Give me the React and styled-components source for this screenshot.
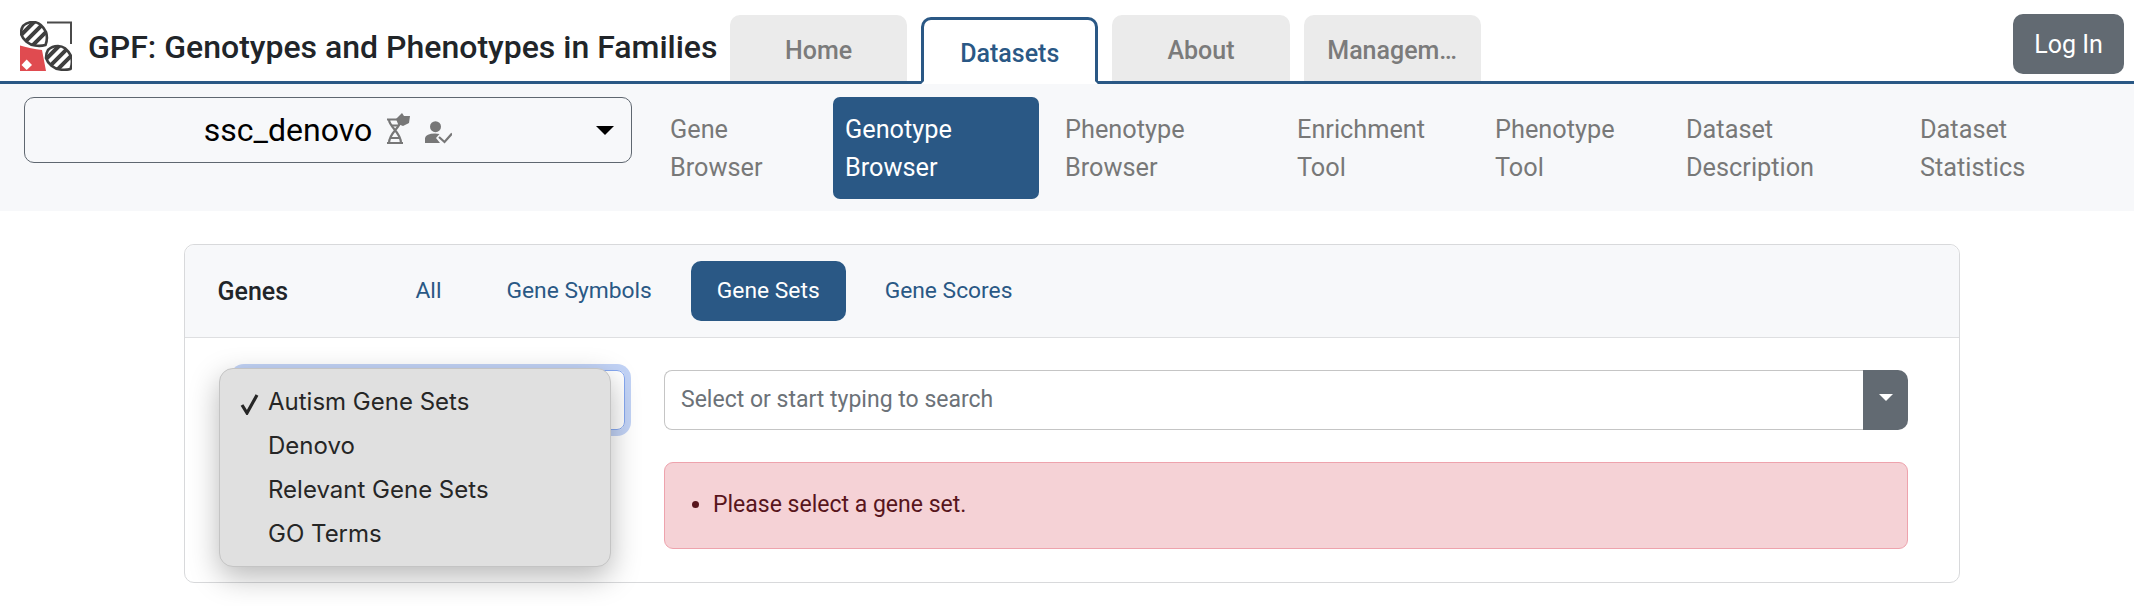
import React from 'react';
import styled, { createGlobalStyle } from 'styled-components';

const Global = createGlobalStyle`
  html, body {
    margin: 0;
    padding: 0;
    background: #fff;
    font-family: Roboto, "Liberation Sans", sans-serif;
  }
  * { box-sizing: border-box; }
`;

const Page = styled.div`
  width: 2134px;
  height: 606px;
  overflow: hidden;
`;

const Header = styled.header`
  display: flex;
  height: 84px;
  padding-left: 20px;
  padding-right: 10px;
  border-bottom: 3px solid #2a5885;
`;

const Brand = styled.div`
  display: flex;
  align-items: center;
  width: 710px;
  gap: 16px;
  padding-top: 19px;
  padding-bottom: 6px;
`;

const Title = styled.span`
  font-size: 32px;
  font-weight: 500;
  color: #212529;
  white-space: nowrap;
`;

const Tabs = styled.nav`
  display: flex;
  gap: 14px;
  align-items: flex-end;
`;

const Tab = styled.a`
  display: flex;
  align-items: center;
  justify-content: center;
  width: 177.2px;
  height: ${({ $active }) => ($active ? '67px' : '66px')};
  margin-bottom: ${({ $active }) => ($active ? '-3px' : '0')};
  padding-top: 5px;
  border-radius: 10px 10px 0 0;
  font-size: 25px;
  font-weight: 500;
  color: ${({ $active }) => ($active ? '#2a5885' : '#7b7b7b')};
  background: ${({ $active }) => ($active ? '#fff' : '#ebebeb')};
  border: ${({ $active }) => ($active ? '3px solid #2a5885' : 'none')};
  border-bottom: ${({ $active }) => ($active ? '3px solid #fff' : 'none')};
`;

const LoginButton = styled.button`
  margin-left: auto;
  margin-top: 14px;
  width: 111px;
  height: 60px;
  border: none;
  border-radius: 10px;
  background: #626a72;
  color: #fff;
  font-family: inherit;
  font-size: 25px;
`;

const SubBar = styled.div`
  display: flex;
  align-items: flex-start;
  height: 127px;
  padding: 13px 0 0 24px;
  background: #f7f8fa;
`;

const DatasetSelect = styled.div`
  position: relative;
  display: flex;
  align-items: center;
  justify-content: center;
  gap: 15px;
  width: 608px;
  height: 66px;
  margin-right: 26px;
  border: 1px solid #5f6770;
  border-radius: 10px;
  font-size: 32px;
  color: #000;
`;

const BlackCaret = styled.i`
  position: absolute;
  right: 17px;
  top: 28px;
  border-left: 9px solid transparent;
  border-right: 9px solid transparent;
  border-top: 9px solid #000;
`;

const DatasetIcons = styled.span`
  display: flex;
  align-items: flex-end;
  gap: 15px;
  margin-bottom: 4px;
  color: #777;
`;

const SubNav = styled.nav`
  display: flex;
`;

const SubItem = styled.a`
  width: ${({ $w }) => $w}px;
  height: 102px;
  padding: 14px 12px;
  border-radius: 7px;
  font-size: 25.3px;
  line-height: 38px;
  color: ${({ $active }) => ($active ? '#fff' : '#787878')};
  background: ${({ $active }) => ($active ? '#2a5885' : 'transparent')};
`;

const Spacer = styled.div`
  width: 14px;
`;

const Card = styled.section`
  width: 1776px;
  height: 339px;
  margin: 33px 0 0 184px;
  border: 1.5px solid #d8d9db;
  border-radius: 10px;
  overflow: visible;
`;

const CardHeader = styled.div`
  display: flex;
  align-items: center;
  height: 93px;
  padding-left: 32.5px;
  background: #f7f8fa;
  border-bottom: 1.5px solid #dedfe1;
  border-radius: 10px 10px 0 0;
`;

const CardLabel = styled.span`
  width: 172px;
  font-size: 25px;
  font-weight: 500;
  color: #212529;
`;

const Pill = styled.a`
  display: flex;
  align-items: center;
  height: 60px;
  margin-top: -1px;
  margin-right: 13px;
  padding: 0 26px;
  border-radius: 10px;
  font-size: 22.8px;
  color: ${({ $active }) => ($active ? '#fff' : '#2a5885')};
  background: ${({ $active }) => ($active ? '#2a5885' : 'transparent')};
`;

const CardBody = styled.div`
  display: flex;
  padding: 32px 0 0 53px;
`;

const SelectWrap = styled.div`
  position: relative;
  width: 387px;
  height: 60px;
  margin-right: 39px;
`;

const FocusedSelect = styled.div`
  height: 60px;
  margin-left: -2px;
  border: 1.5px solid #86a8f0;
  border-radius: 8px;
  box-shadow: 0 0 0 6px #c2d3f6;
`;

const PopupMenu = styled.ul`
  position: absolute;
  left: -19px;
  top: -2px;
  width: 392px;
  height: 199px;
  margin: 0;
  padding: 11px 0 0 48px;
  list-style: none;
  background: #e0e0e0;
  border: 1px solid #c4c4c4;
  border-radius: 14px;
  box-shadow: 0 10px 30px rgba(0, 0, 0, 0.28);
  font-family: Inter, sans-serif;
  font-size: 24px;
  color: #262626;
`;

const MenuRow = styled.li`
  position: relative;
  height: 44px;
  line-height: 44px;
  white-space: nowrap;
`;

const Check = styled.svg`
  position: absolute;
  left: -28px;
  top: 13px;
`;

const Right = styled.div`
  width: 1244px;
`;

const SearchRow = styled.div`
  display: flex;
  height: 60px;
`;

const SearchInput = styled.div`
  flex: 1;
  display: flex;
  align-items: center;
  padding-left: 16px;
  padding-bottom: 2px;
  border: 1.5px solid #c5c5c5;
  border-right: none;
  border-radius: 8px 0 0 8px;
  font-size: 23px;
  color: #6c7278;
`;

const SearchButton = styled.div`
  display: flex;
  align-items: center;
  justify-content: center;
  width: 45px;
  padding-bottom: 6px;
  background: #626a72;
  border-radius: 0 10px 10px 0;
`;

const WhiteCaret = styled.i`
  border-left: 7px solid transparent;
  border-right: 7px solid transparent;
  border-top: 7px solid #fff;
`;

const Alert = styled.div`
  display: flex;
  align-items: center;
  height: 87px;
  margin-top: 32px;
  padding-left: 27px;
  padding-bottom: 2px;
  background: #f5d2d6;
  border: 1.5px solid #eea3ad;
  border-radius: 9px;
  font-size: 23px;
  color: #58151c;
`;

const Bullet = styled.i`
  width: 7px;
  height: 7px;
  margin-right: 14px;
  border-radius: 50%;
  background: #58151c;
`;

const BLOB =
  'M25.5 24 C27 20 27 14 26 11 C23 5 18 1 13 1 C9 1 5 3 3 5 C1 8 1 11 1 13 C3 19 9 24 15 24.5 C18 25 22 25 25.5 24 Z';

const Logo = () => (
  <svg width="52" height="50" viewBox="0 0 52 50" style={{ flex: 'none', marginTop: '-3px' }}>
    <defs>
      <clipPath id="blobClip">
        <path d={BLOB} />
      </clipPath>
    </defs>
    <path d="M27 1.5 H51 V23" fill="none" stroke="#4a4a4a" strokeWidth="2" />
    <path d="M0 24.5 C8 27 14 28 22 29 L26 50 H0 Z" fill="#e04b50" />
    <path d="M1.5 44 L6.7 38.5 L12 44 L6.7 49 Z" fill="#fff" />
    {[0, 1].map((n) => (
      <g key={n} transform={`translate(${n * 25} ${n * 24})`}>
        <path d={BLOB} fill="#fff" />
        <g clipPath="url(#blobClip)" stroke="#3f3f3f" strokeWidth="4">
          <path d="M0 15 L15 0 M0 26 L26 0 M7 30 L30 7" />
        </g>
        <path d={BLOB} fill="none" stroke="#3f3f3f" strokeWidth="2.6" />
      </g>
    ))}
  </svg>
);

const DnaIcon = () => (
  <svg width="23" height="31" viewBox="0 0 23 31" fill="none">
    <path d="M0 6.5 H11 M0 30 H16 M2 6.5 C2 14 14 19 14 30 M13 9 C13 15 2 20 2 30" stroke="currentColor" strokeWidth="2.2" />
    <path d="M3 25 H13 M5 12.5 H11" stroke="currentColor" strokeWidth="2" />
    <path d="M9 6 L13 2 L15 0 L17 3 L23 3 L22 10 L16 13 L11 11 Z" fill="currentColor" />
  </svg>
);

const PersonCheckIcon = () => (
  <svg width="27" height="23" viewBox="0 0 27 23" fill="none">
    <circle cx="10.5" cy="5.7" r="5.5" fill="currentColor" />
    <path d="M0 22 V17 Q1 12.5 10 12.5 L14.5 13 L11 17 L15 22 Z" fill="currentColor" />
    <path d="M14 16 L19.5 21 L27 12.5" stroke="currentColor" strokeWidth="2.2" />
  </svg>
);

const subItems = [
  { label: ['Gene', 'Browser'], w: 175 },
  { label: ['Genotype', 'Browser'], w: 206, active: true },
  { spacer: true },
  { label: ['Phenotype', 'Browser'], w: 232 },
  { label: ['Enrichment', 'Tool'], w: 198 },
  { label: ['Phenotype', 'Tool'], w: 191 },
  { label: ['Dataset', 'Description'], w: 234 },
  { label: ['Dataset', 'Statistics'], w: 200 },
];

export default function App() {
  return (
    <Page>
      <Global />
      <Header>
        <Brand>
          <Logo />
          <Title>GPF: Genotypes and Phenotypes in Families</Title>
        </Brand>
        <Tabs>
          <Tab>Home</Tab>
          <Tab $active>Datasets</Tab>
          <Tab>About</Tab>
          <Tab>Managem…</Tab>
        </Tabs>
        <LoginButton>Log In</LoginButton>
      </Header>

      <SubBar>
        <DatasetSelect>
          ssc_denovo
          <DatasetIcons>
            <DnaIcon />
            <PersonCheckIcon />
          </DatasetIcons>
          <BlackCaret />
        </DatasetSelect>
        <SubNav>
          {subItems.map((item, i) =>
            item.spacer ? (
              <Spacer key={i} />
            ) : (
              <SubItem key={i} $w={item.w} $active={item.active}>
                {item.label[0]}
                <br />
                {item.label[1]}
              </SubItem>
            )
          )}
        </SubNav>
      </SubBar>

      <Card>
        <CardHeader>
          <CardLabel>Genes</CardLabel>
          <Pill>All</Pill>
          <Pill>Gene Symbols</Pill>
          <Pill $active>Gene Sets</Pill>
          <Pill>Gene Scores</Pill>
        </CardHeader>
        <CardBody>
          <SelectWrap>
            <FocusedSelect />
            <PopupMenu>
              <MenuRow>
                <Check width="20" height="22" viewBox="0 0 20 22" fill="none">
                  <path d="M2 12 L7 20 L17 2" stroke="#262626" strokeWidth="3.2" />
                </Check>
                Autism Gene Sets
              </MenuRow>
              <MenuRow>Denovo</MenuRow>
              <MenuRow>Relevant Gene Sets</MenuRow>
              <MenuRow>GO Terms</MenuRow>
            </PopupMenu>
          </SelectWrap>
          <Right>
            <SearchRow>
              <SearchInput>Select or start typing to search</SearchInput>
              <SearchButton>
                <WhiteCaret />
              </SearchButton>
            </SearchRow>
            <Alert>
              <Bullet />
              Please select a gene set.
            </Alert>
          </Right>
        </CardBody>
      </Card>
    </Page>
  );
}
